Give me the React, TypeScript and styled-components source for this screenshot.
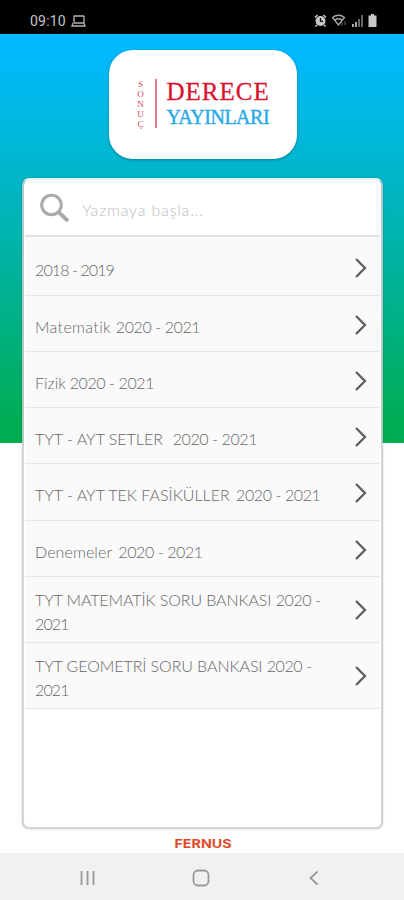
import React from "react";
import styled, { createGlobalStyle } from "styled-components";

const GlobalStyle = createGlobalStyle`
  * { box-sizing: border-box; }
  body { margin: 0; background: #fff; font-family: Lato, "Liberation Sans", sans-serif; }
`;

const Screen = styled.div`
  width: 404px;
  height: 900px;
  display: flex;
  flex-direction: column;
  align-items: center;
  overflow: hidden;
  background: linear-gradient(180deg, #00b9ff 45px, #00b8d4 150px, #00b5c5 185px, #00ad55 420px, #00ac50 443px, #fff 443px);
`;

const StatusBar = styled.header`
  width: 100%;
  height: 34px;
  flex: none;
  display: flex;
  align-items: center;
  justify-content: space-between;
  padding: 7px 27px 0 30px;
  background: #000;
  color: #c4c4c4;
`;

const StatusGroup = styled.div`
  display: flex;
  align-items: center;
  gap: 5px;
`;

const Clock = styled.span`
  font: 400 14px/16px Roboto, sans-serif;
  letter-spacing: 0.2px;
`;

const LogoCard = styled.div`
  width: 188px;
  height: 109px;
  flex: none;
  margin: 16px 0 19px 1px;
  display: flex;
  align-items: center;
  padding: 0 0 2px 26px;
  border-radius: 24px;
  background: #fff;
  box-shadow: 0 1px 3px rgba(0, 50, 80, 0.45);
`;

const LogoSide = styled.div`
  width: 12px;
  display: flex;
  flex-direction: column;
  align-items: center;
  color: #d8455c;
  font: 400 9px/10px "Liberation Serif", serif;
`;

const LogoRule = styled.div`
  width: 2px;
  height: 49px;
  margin: 0 10px 0 8px;
  background: #e27c8c;
`;

const LogoWords = styled.div`
  display: flex;
  flex-direction: column;
  font-family: "Liberation Serif", serif;
  white-space: nowrap;
`;

const LogoTop = styled.span`
  color: #d91430;
  font-size: 25px;
  line-height: 26px;
  letter-spacing: 1px;
  -webkit-text-stroke: 0.3px #d91430;
`;

const LogoBottom = styled.span`
  color: #29a9e8;
  font-size: 20px;
  line-height: 24px;
  letter-spacing: -0.5px;
  -webkit-text-stroke: 0.4px #29a9e8;
`;

const Panel = styled.main`
  width: 361px;
  height: 651px;
  flex: none;
  margin-left: 1px;
  padding: 0 1px;
  border: 2px solid rgba(208, 208, 208, 0.85);
  border-top-color: #e4f4f5;
  border-radius: 7px;
  background: #fff;
  background-clip: padding-box;
  box-shadow: 0 0 2px rgba(0, 0, 0, 0.22);
`;

const SearchRow = styled.div`
  height: 57px;
  display: flex;
  align-items: center;
  gap: 11px;
  padding: 0 0 0 14px;
  border-bottom: 2px solid #e2e2e2;
`;

const Placeholder = styled.span`
  margin-top: 4px;
  color: #bdbdbd;
  font-size: 16px;
  font-weight: 300;
  letter-spacing: 0.8px;
`;

const Row = styled.div<{ $height: number; $top: number }>`
  height: ${(p) => p.$height}px;
  display: flex;
  align-items: center;
  justify-content: space-between;
  padding: ${(p) => p.$top}px 12px 0 10px;
  border-bottom: 1.5px solid #e6e6e6;
  background: #fafafa;
`;

const Label = styled.div`
  display: flex;
  flex-direction: column;
  margin-top: 4px;
  color: #676767;
  font-size: 16px;
  font-weight: 300;
  line-height: 23.5px;
  white-space: pre;
`;

const Line = styled.div`
  display: flex;
`;

const Name = styled.span<{ $spacing: number }>`
  letter-spacing: ${(p) => p.$spacing}px;
`;

const Years = styled.span<{ $spacing: number; $gap?: number }>`
  margin-left: ${(p) => p.$gap ?? 0}px;
  letter-spacing: ${(p) => p.$spacing}px;
`;

const Maker = styled.div`
  height: 24px;
  flex: none;
  display: flex;
  align-items: center;
  padding: 5px 0 0 1px;
`;

const MakerName = styled.span`
  color: #dc4b28;
  font: 700 11.5px/14px Inter, sans-serif;
  transform: scaleX(1.24);
`;

const NavBar = styled.nav`
  width: 100%;
  height: 47px;
  flex: none;
  display: flex;
  align-items: center;
  justify-content: space-between;
  padding: 2px 85px 0 79px;
  background: #f1f1f1;
`;

const HomeIcon = styled.svg`
  margin-right: 4px;
`;

type Item = {
  name: string;
  years: string;
  wrapped?: string;
  height: number;
  top?: number;
  spacing: number;
  yearSpacing: number;
  gap: number;
};

const rows: Item[] = [
  { name: "", years: "2018 - 2019", height: 59, top: 4, spacing: 0, yearSpacing: -0.9, gap: 0 },
  { name: "Matematik ", years: "2020 - 2021", height: 56, spacing: 0.35, yearSpacing: -0.4, gap: 0 },
  { name: "Fizik ", years: "2020 - 2021", height: 56, spacing: 0, yearSpacing: -0.4, gap: -0.5 },
  { name: "TYT - AYT SETLER  ", years: "2020 - 2021", height: 56, spacing: 0, yearSpacing: -0.4, gap: 1 },
  { name: "TYT - AYT TEK FASİKÜLLER ", years: "2020 - 2021", height: 57, spacing: 0, yearSpacing: -0.4, gap: 2 },
  { name: "Denemeler ", years: "2020 - 2021", height: 56, spacing: 0.1, yearSpacing: -0.4, gap: 2 },
  { name: "TYT MATEMATİK SORU BANKASI ", years: "2020 -", wrapped: "2021", height: 66, top: 0, spacing: -0.1, yearSpacing: -0.4, gap: 0 },
  { name: "TYT GEOMETRİ SORU BANKASI ", years: "2020 -", wrapped: "2021", height: 66, top: 0, spacing: -0.08, yearSpacing: -0.4, gap: 0 },
];

const Chevron = () => (
  <svg width="14" height="22" viewBox="0 0 14 22" fill="none" stroke="#5e5e5e" strokeWidth="2.3">
    <path d="M2 2l9 9-9 9" />
  </svg>
);

export default function App() {
  return (
    <>
      <GlobalStyle />
      <Screen>
        <StatusBar>
          <StatusGroup>
            <Clock>09:10</Clock>
            <svg width="15" height="12" viewBox="0 0 15 12" fill="none" stroke="#b5b5b5" strokeWidth="1.3">
              <rect x="3" y="1" width="10" height="7" rx="0.5" />
              <path d="M2 8L1 11h13l-1-3" />
            </svg>
          </StatusGroup>
          <StatusGroup>
            <svg width="13" height="13" viewBox="0 0 13 13">
              <circle cx="6.5" cy="7" r="5" fill="#c8c8c8" />
              <path d="M1 3.5L3.5 1M12 3.5L9.5 1M3 11l-1.5 1.5M10 11l1.5 1.5" stroke="#c8c8c8" strokeWidth="1.6" />
              <path d="M6.5 4v3.4H9" stroke="#111" strokeWidth="1.3" fill="none" />
            </svg>
            <svg width="15" height="13" viewBox="0 0 15 13" fill="none" stroke="#aaa" strokeWidth="1.4">
              <path d="M0.5 3.5Q6.5-1 12.5 3.5L6.5 11zM3 6q3.5-2.5 7 0" />
              <path d="M10 8v4M13 7v4" stroke="#666" strokeWidth="1" />
            </svg>
            <svg width="11" height="12" viewBox="0 0 11 12">
              <path d="M0 9h2v3H0zM3 7h2v5H3z" fill="#aaa" />
              <path d="M6 4h2v8H6zM9 0h2v12H9z" fill="#666" />
            </svg>
            <svg width="9" height="13" viewBox="0 0 9 13" fill="#c8c8c8">
              <path d="M3 0h3v1.5H8.5V13H0.5V1.5H3z" />
            </svg>
          </StatusGroup>
        </StatusBar>
        <LogoCard>
          <LogoSide>
            {["S", "O", "N", "U", "Ç"].map((c) => (
              <span key={c}>{c}</span>
            ))}
          </LogoSide>
          <LogoRule />
          <LogoWords>
            <LogoTop>DERECE</LogoTop>
            <LogoBottom>YAYINLARI</LogoBottom>
          </LogoWords>
        </LogoCard>
        <Panel>
          <SearchRow>
            <svg width="32" height="30" viewBox="0 0 32 30" fill="none" stroke="#aaa">
              <circle cx="12.5" cy="12" r="9.8" strokeWidth="3" />
              <path d="M19 18.5L29 28" strokeWidth="4" />
            </svg>
            <Placeholder>Yazmaya başla...</Placeholder>
          </SearchRow>
          {rows.map((r) => (
            <Row key={r.name} $height={r.height} $top={r.top ?? 2}>
              <Label>
                <Line>
                  {r.name && <Name $spacing={r.spacing}>{r.name}</Name>}
                  <Years $spacing={r.yearSpacing} $gap={r.gap}>{r.years}</Years>
                </Line>
                {r.wrapped && (
                  <Line>
                    <Years $spacing={-0.9}>{r.wrapped}</Years>
                  </Line>
                )}
              </Label>
              <Chevron />
            </Row>
          ))}
        </Panel>
        <Maker>
          <MakerName>FERNUS</MakerName>
        </Maker>
        <NavBar>
          <svg width="18" height="16" viewBox="0 0 18 16" stroke="#999" strokeWidth="1.8">
            <path d="M2.5 1v14M8.5 1v14M14.5 1v14" />
          </svg>
          <HomeIcon width="18" height="18" viewBox="0 0 18 18" fill="none" stroke="#999" strokeWidth="1.8">
            <rect x="1.5" y="1.5" width="15" height="15" rx="4.5" />
          </HomeIcon>
          <svg width="11" height="16" viewBox="0 0 11 16" fill="none" stroke="#999" strokeWidth="1.8">
            <path d="M9.5 1.5L2.5 8l7 6.5" />
          </svg>
        </NavBar>
      </Screen>
    </>
  );
}
